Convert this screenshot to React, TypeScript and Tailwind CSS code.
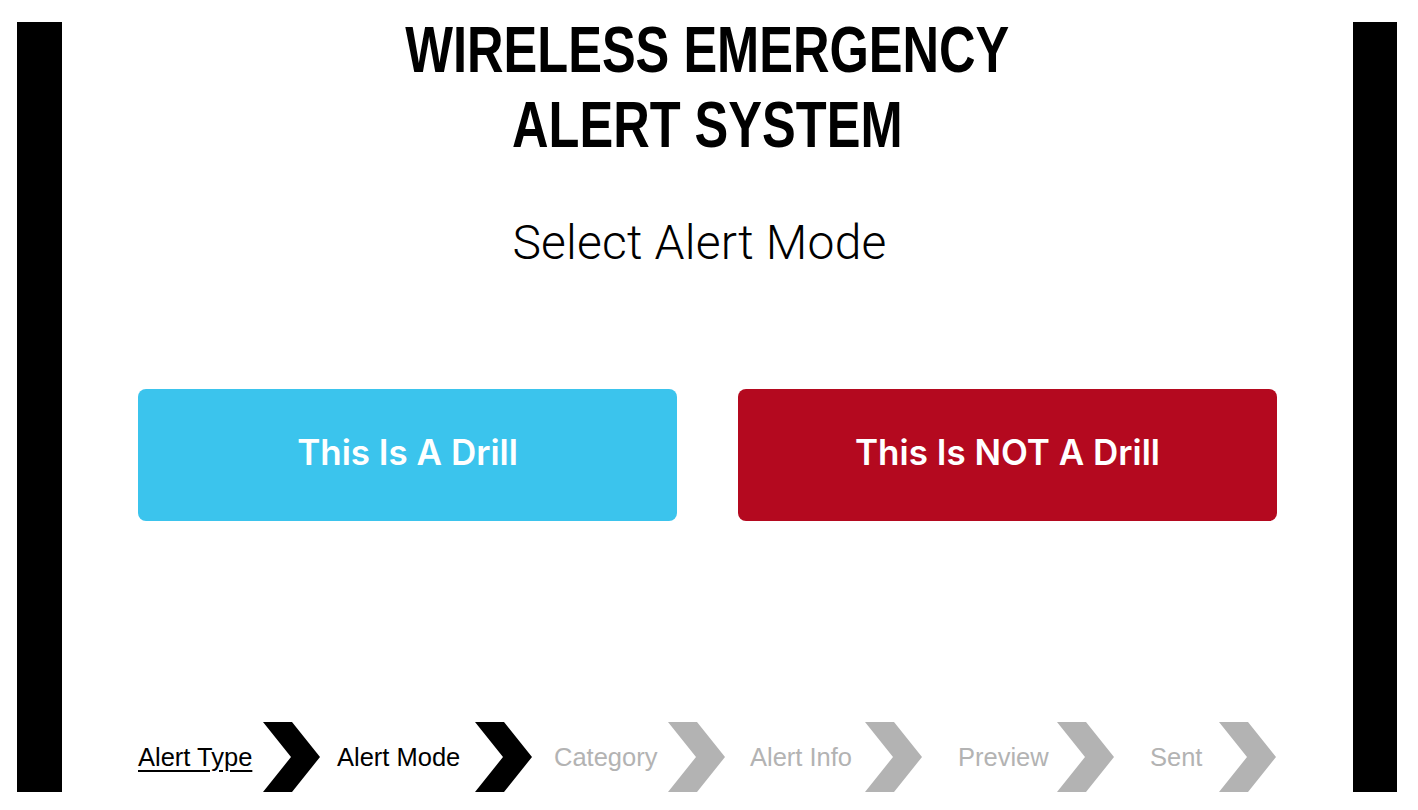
import React from 'react';

const steps = [
  { label: 'Alert Type', state: 'done', w: 'w-[125px]', ml: 'ml-0' },
  { label: 'Alert Mode', state: 'current', w: 'w-[138px]', ml: 'ml-[17px]' },
  { label: 'Category', state: 'todo', w: 'w-[114px]', ml: 'ml-[22px]' },
  { label: 'Alert Info', state: 'todo', w: 'w-[115px]', ml: 'ml-[25px]' },
  { label: 'Preview', state: 'todo', w: 'w-[99px]', ml: 'ml-[36px]' },
  { label: 'Sent', state: 'todo', w: 'w-[69px]', ml: 'ml-[36px]' },
];

const Chevron: React.FC<{ color: string }> = ({ color }) => (
  <svg width="57" height="70" viewBox="0 0 57 70" className="shrink-0">
    <polygon points="0,0 29,0 57,35 29,70 0,70 28,35" fill={color} />
  </svg>
);

const App: React.FC = () => {
  return (
    <div className="w-[1418px] h-[810px] bg-white flex pt-[22px] pb-[18px] font-['Liberation_Sans',Arial,sans-serif]">
      {/* left bar */}
      <div className="ml-[17px] w-[45px] shrink-0 bg-black" />

      <div className="flex-1 min-w-0 flex flex-col items-center px-[76px]">
        <h1 className="mt-[-9px] text-center text-[64px] leading-[75px] font-bold text-black scale-x-[0.79] whitespace-nowrap">
          WIRELESS EMERGENCY
          <br />
          ALERT SYSTEM
        </h1>

        <p className="mt-[52px] mr-[16px] text-[48px] leading-[56px] font-light text-black tracking-[0.2px] font-['Roboto','Liberation_Sans',sans-serif]">
          Select Alert Mode
        </p>

        <div className="mt-[118px] w-full flex justify-between">
          <button className="w-[539px] h-[132px] pb-[5px] rounded-[8px] bg-[#3bc4ed] text-white text-[35px] font-semibold font-['Inter','Liberation_Sans',sans-serif]">
            This Is A Drill
          </button>
          <button className="w-[539px] h-[132px] pb-[5px] rounded-[8px] bg-[#b4091f] text-white text-[35px] font-semibold font-['Inter','Liberation_Sans',sans-serif]">
            This Is NOT A Drill
          </button>
        </div>

        {/* step breadcrumb */}
        <div className="mt-auto w-full flex items-center">
          {steps.map((s) => (
            <div key={s.label} className={`flex items-center shrink-0 ${s.ml}`}>
              <span
                className={`${s.w} text-[25.5px] leading-[30px] whitespace-nowrap ${
                  s.state === 'todo' ? 'text-[#b3b3b3]' : 'text-black'
                }`}
              >
                <span className={s.state === 'done' ? 'underline underline-offset-[4px]' : ''}>{s.label}</span>
              </span>
              <Chevron color={s.state === 'todo' ? '#b3b3b3' : '#000000'} />
            </div>
          ))}
        </div>
      </div>

      {/* right bar */}
      <div className="mr-[21px] w-[44px] shrink-0 bg-black" />
    </div>
  );
};

export default App;
